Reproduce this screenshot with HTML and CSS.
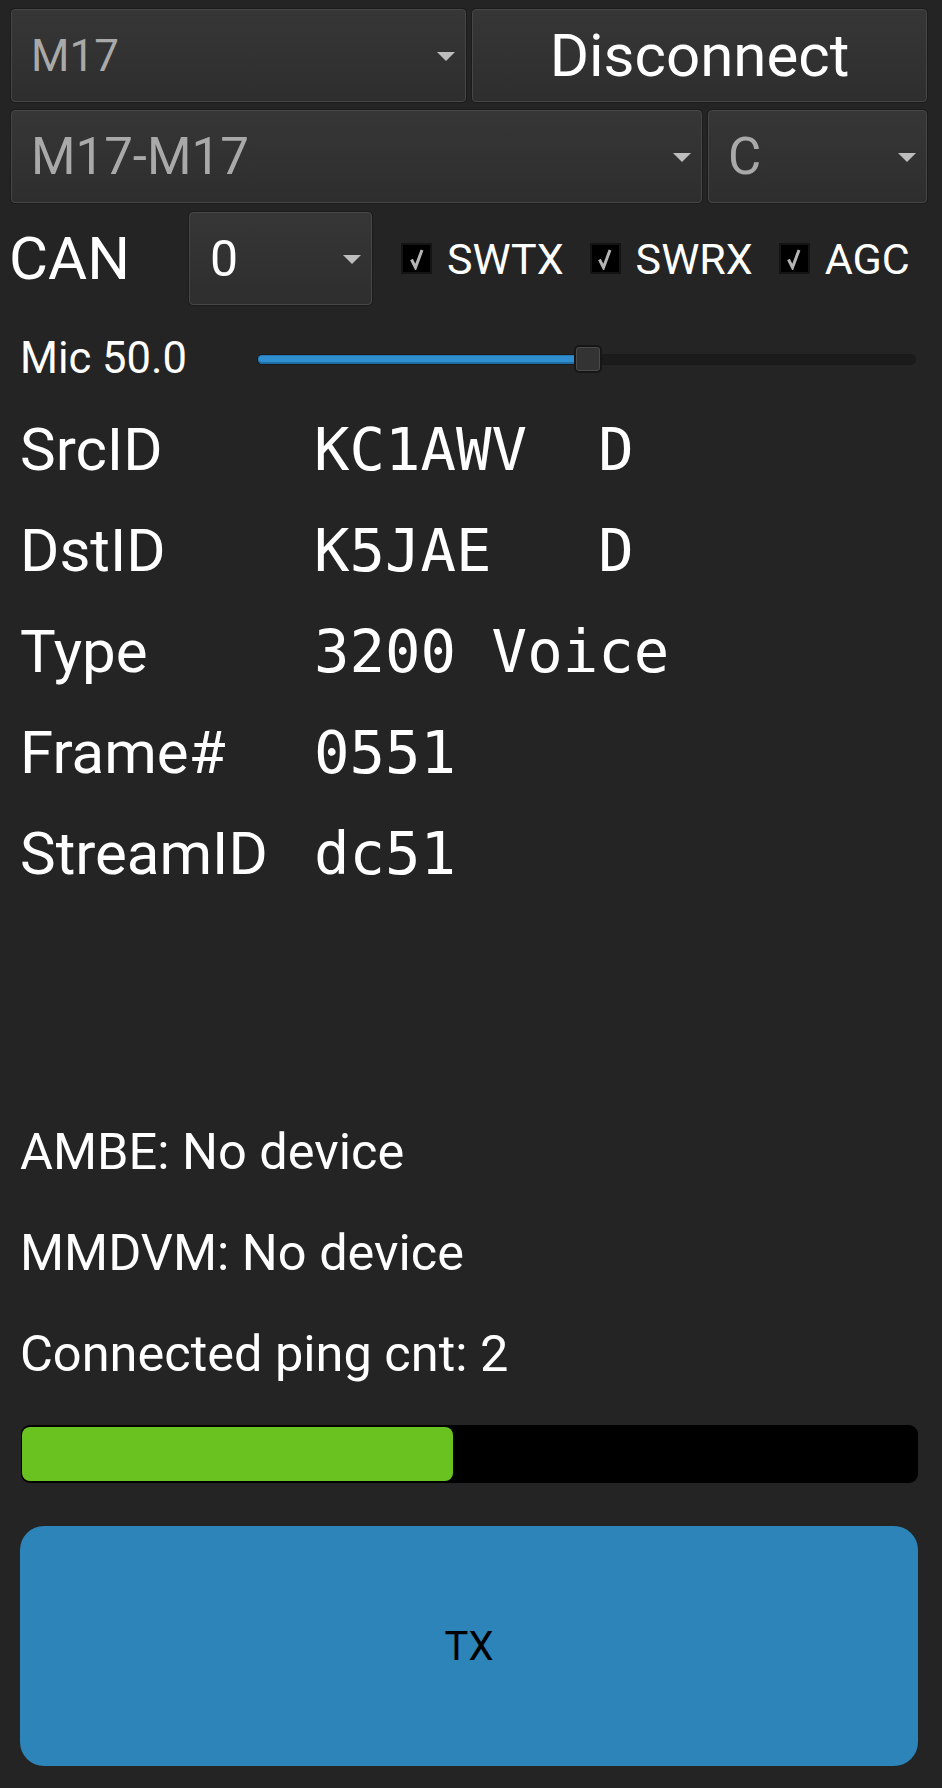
FILE: index.html
```html
<!DOCTYPE html>
<html lang="en">
<head>
<meta charset="utf-8">
<title>M17 client</title>
<link rel="stylesheet" href="styles.css">
</head>
<body>
<div class="app">
  <div class="row row-top">
    <div class="combo small"><span class="combo-text">M17</span><span class="arrow"></span></div>
    <button class="btn">Disconnect</button>
  </div>
  <div class="row row-host">
    <div class="combo"><span class="combo-text">M17-M17</span><span class="arrow"></span></div>
    <div class="combo"><span class="combo-text">C</span><span class="arrow"></span></div>
  </div>
  <div class="row row-can">
    <span class="can-label">CAN</span>
    <div class="combo can-combo"><span class="combo-text white">0</span><span class="arrow"></span></div>
    <div class="checks">
      <label class="check"><span class="box"><svg width="14" height="22" viewBox="0 0 14 22"><path d="M1.5 11.5 L5.5 19.5 L12 2" fill="none" stroke="#b4b4b4" stroke-width="3" stroke-linejoin="miter"/></svg></span>SWTX</label>
      <label class="check"><span class="box"><svg width="14" height="22" viewBox="0 0 14 22"><path d="M1.5 11.5 L5.5 19.5 L12 2" fill="none" stroke="#b4b4b4" stroke-width="3" stroke-linejoin="miter"/></svg></span>SWRX</label>
      <label class="check"><span class="box"><svg width="14" height="22" viewBox="0 0 14 22"><path d="M1.5 11.5 L5.5 19.5 L12 2" fill="none" stroke="#b4b4b4" stroke-width="3" stroke-linejoin="miter"/></svg></span>AGC</label>
    </div>
  </div>
  <div class="row row-mic">
    <span class="mic-label">Mic 50.0</span>
    <div class="slider">
      <div class="slider-fill"></div>
      <div class="slider-handle"></div>
    </div>
  </div>
  <div class="data">
    <div class="data-row"><span class="data-label">SrcID</span><span class="data-value">KC1AWV  D</span></div>
    <div class="data-row"><span class="data-label">DstID</span><span class="data-value">K5JAE   D</span></div>
    <div class="data-row"><span class="data-label">Type</span><span class="data-value">3200 Voice</span></div>
    <div class="data-row"><span class="data-label">Frame#</span><span class="data-value">0551</span></div>
    <div class="data-row"><span class="data-label">StreamID</span><span class="data-value">dc51</span></div>
  </div>
  <div class="status">
    <div class="status-line">AMBE: No device</div>
    <div class="status-line">MMDVM: No device</div>
    <div class="status-line">Connected ping cnt: 2</div>
  </div>
  <div class="level"><div class="level-fill" style="width:48.2%"></div></div>
  <button class="tx">TX</button>
</div>
</body>
</html>
```
FILE: styles.css
```css
html, body {
  margin: 0;
  padding: 0;
  background: #242424;
}
body {
  width: 942px;
  height: 1788px;
  overflow: hidden;
  font-family: Roboto, "Liberation Sans", sans-serif;
  color: #ffffff;
}
.app {
  display: flex;
  flex-direction: column;
  padding: 9px 15px 0 11px;
}
.row {
  display: flex;
  align-items: center;
}
.row-top {
  display: grid;
  grid-template-columns: 1fr 1fr;
  column-gap: 6px;
  height: 93px;
}
.row-host {
  display: grid;
  grid-template-columns: 1fr 219px;
  column-gap: 6px;
  height: 93px;
  margin-top: 8px;
}
.combo, .btn {
  box-sizing: border-box;
  height: 93px;
  border: 1px solid #474747;
  border-radius: 4px;
  box-shadow: 0 0 0 1px #1b1b1b;
  background: linear-gradient(#363636, #2e2e2e);
}
.combo {
  position: relative;
  display: flex;
  align-items: center;
  padding-left: 19px;
  font-size: 51px;
  color: #a9a9a9;
}
.combo.small {
  font-size: 44px;
  padding-left: 19px;
}
.combo-text.white {
  color: #ffffff;
}
.arrow {
  position: absolute;
  right: 10px;
  top: 50%;
  margin-top: -4px;
  width: 0;
  height: 0;
  border-left: 9px solid transparent;
  border-right: 9px solid transparent;
  border-top: 9px solid #bdbdbd;
}
.btn {
  font-family: Roboto, "Liberation Sans", sans-serif;
  font-size: 60px;
  color: #ffffff;
  padding: 0;
  text-align: center;
}
.row-can {
  height: 93px;
  margin-top: 9px;
}
.can-label {
  width: 180px;
  margin-left: -2px;
  font-size: 60px;
  line-height: 93px;
}
.can-combo {
  width: 183px;
  padding-left: 20px;
  font-size: 50px;
}
.checks {
  display: flex;
  align-items: center;
  gap: 26px;
  margin-left: 29px;
}
.check {
  display: flex;
  align-items: center;
  gap: 15px;
  font-size: 43px;
}
.box {
  box-sizing: border-box;
  width: 31px;
  height: 31px;
  background: #000;
  border: 2px solid #141414;
  display: flex;
  align-items: center;
  justify-content: center;
}
.box svg {
  display: block;
}
.row-mic {
  height: 30px;
  margin-top: 39px;
}
.mic-label {
  box-sizing: border-box;
  width: 246px;
  padding-left: 9px;
  font-size: 43.5px;
  line-height: 30px;
  white-space: nowrap;
}
.slider {
  position: relative;
  box-sizing: border-box;
  width: 659px;
  height: 11px;
  background: #1b1b1b;
  border-radius: 5px;
  border: 1px solid #1a1a1a;
}
.slider-fill {
  height: 100%;
  width: 322px;
  border-radius: 5px 0 0 5px;
  background: #2f8fd0;
  box-shadow: inset 0 -2px 0 #1f6ea6, inset 0 1px 0 #2678b3;
}
.slider-handle {
  position: absolute;
  left: 316px;
  top: 50%;
  margin-top: -14px;
  box-sizing: border-box;
  width: 28px;
  height: 28px;
  border-radius: 5px;
  border: 2px solid #161616;
  background: #333333;
  box-shadow: inset 0 0 0 1px #4a4a4a;
}
.data {
  margin-top: 25px;
  display: flex;
  flex-direction: column;
}
.data-row {
  display: flex;
  align-items: baseline;
  height: 101px;
  line-height: 101px;
  padding-left: 9px;
}
.data-label {
  width: 294px;
  font-size: 60px;
}
.data-value {
  font-family: "DejaVu Sans Mono", "Liberation Mono", monospace;
  font-size: 59px;
  white-space: pre;
}
.status {
  margin-top: 197px;
  display: flex;
  flex-direction: column;
  padding-left: 9px;
}
.status-line {
  height: 101px;
  line-height: 101px;
  font-size: 50.5px;
}
.level {
  box-sizing: border-box;
  margin: 21px 9px 0 10px;
  height: 58px;
  background: #000;
  border-radius: 9px;
  padding: 2px 1px;
}
.level-fill {
  height: 100%;
  background: #6ac221;
  border-radius: 8px;
}
.tx {
  margin: 43px 9px 0 9px;
  height: 240px;
  border: none;
  border-radius: 24px;
  background: #2d84b8;
  color: #000;
  font-family: Roboto, "Liberation Sans", sans-serif;
  font-size: 40px;
  padding: 0;
}
```
